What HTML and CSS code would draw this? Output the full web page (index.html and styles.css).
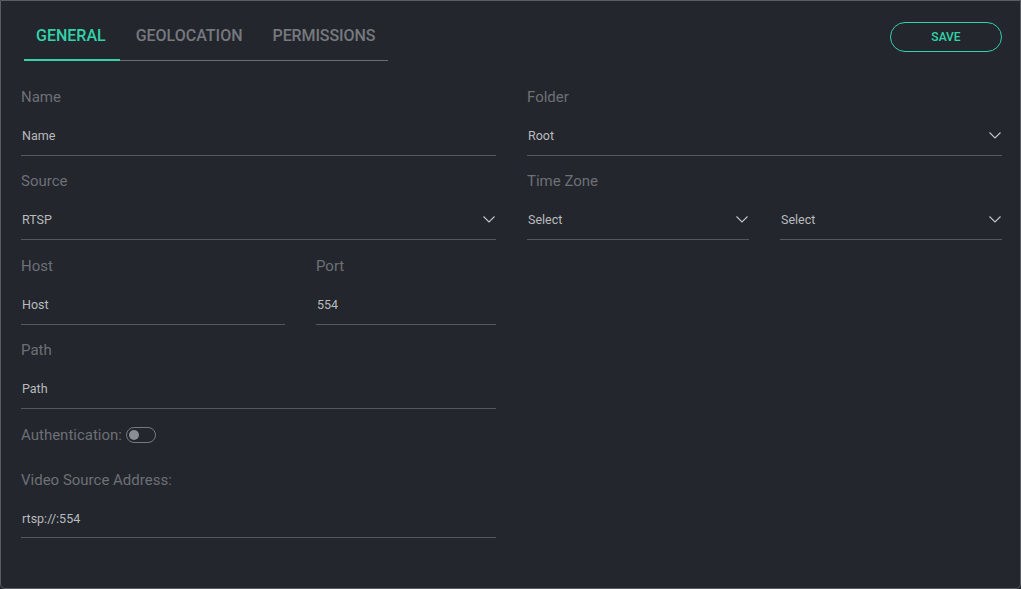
FILE: index.html
```html
<!DOCTYPE html>
<html>
<head>
<meta charset="utf-8">
<link rel="stylesheet" href="styles.css">
</head>
<body>
<div class="panel">
  <div class="header">
    <div class="tabs">
      <div class="tab active">GENERAL</div>
      <div class="tab">GEOLOCATION</div>
      <div class="tab">PERMISSIONS</div>
    </div>
    <button class="save">SAVE</button>
  </div>
  <div class="form">
    <div class="col">
      <div class="field">
        <div class="label">Name</div>
        <div class="input"><span>Name</span></div>
      </div>
      <div class="field">
        <div class="label">Source</div>
        <div class="input"><span>RTSP</span><svg class="chev" viewBox="0 0 12 7"><path d="M0.5 0.5 L6 6 L11.5 0.5" /></svg></div>
      </div>
      <div class="row hostrow">
        <div class="field host">
          <div class="label">Host</div>
          <div class="input"><span>Host</span></div>
        </div>
        <div class="field port">
          <div class="label">Port</div>
          <div class="input"><span>554</span></div>
        </div>
      </div>
      <div class="field">
        <div class="label">Path</div>
        <div class="input"><span>Path</span></div>
      </div>
      <div class="auth">
        <span class="label">Authentication:</span>
        <span class="toggle"><span class="knob"></span></span>
      </div>
      <div class="field video">
        <div class="label">Video Source Address:</div>
        <div class="input"><span>rtsp://:554</span></div>
      </div>
    </div>
    <div class="col">
      <div class="field">
        <div class="label">Folder</div>
        <div class="input"><span>Root</span><svg class="chev" viewBox="0 0 12 7"><path d="M0.5 0.5 L6 6 L11.5 0.5" /></svg></div>
      </div>
      <div class="field">
        <div class="label">Time Zone</div>
        <div class="row">
          <div class="input half"><span>Select</span><svg class="chev" viewBox="0 0 12 7"><path d="M0.5 0.5 L6 6 L11.5 0.5" /></svg></div>
          <div class="input half"><span>Select</span><svg class="chev" viewBox="0 0 12 7"><path d="M0.5 0.5 L6 6 L11.5 0.5" /></svg></div>
        </div>
      </div>
    </div>
  </div>
</div>
</body>
</html>
```

FILE: styles.css
```css
html, body {
  margin: 0;
  padding: 0;
  background: #23262d;
}
body {
  font-family: Roboto, "Liberation Sans", sans-serif;
}
.panel {
  box-sizing: border-box;
  width: 1021px;
  height: 589px;
  background: #23262d;
  border: 1px solid #5b5e63;
  border-radius: 0 0 5px 5px;
  padding: 0 18px 0 20px;
}
.header {
  display: flex;
  justify-content: space-between;
  align-items: flex-start;
  padding-top: 20px;
}
.tabs {
  display: flex;
  margin-left: 3px;
  border-bottom: 1px solid #6a6d72;
}
.tab {
  font-size: 16px;
  font-weight: 500;
  line-height: 18px;
  padding: 6px 14px 14px 12px;
  color: #76797e;
  margin-bottom: -1px;
  border-bottom: 2px solid transparent;
}
.tab + .tab { padding-left: 16px; }
.tab:last-child { padding-right: 13px; letter-spacing: -0.1px; }
.tab.active {
  color: #33d2a8;
  border-bottom-color: #33d2a8;
}
.save {
  margin-top: 1px;
  width: 112px;
  height: 30px;
  border: 1px solid #33d2a8;
  border-radius: 15px;
  background: transparent;
  color: #33d2a8;
  font-family: Roboto, "Liberation Sans", sans-serif;
  font-size: 12px;
  font-weight: 500;
  padding: 0;
}
.form {
  display: grid;
  grid-template-columns: 475px 475px;
  column-gap: 31px;
  margin-top: 27px;
}
.col {
  display: flex;
  flex-direction: column;
  gap: 16px;
}
.row {
  display: flex;
  gap: 31px;
}
.hostrow { margin-top: 1px; }
.field {
  display: flex;
  flex-direction: column;
}
.host { width: 264px; }
.port { flex: 1; }
.label {
  font-size: 15px;
  line-height: 18px;
  color: #6d7075;
}
.field > .label { margin-bottom: 21px; }
.input {
  display: flex;
  align-items: center;
  justify-content: space-between;
  height: 16px;
  padding: 0 1px 12px 1px;
  border-bottom: 1px solid #55585d;
  font-size: 12.5px;
  color: #b9bbbe;
}
.half { flex: 1; }
.chev {
  width: 12px;
  height: 7px;
  fill: none;
  stroke: #c3c5c8;
  stroke-width: 1.1;
}
.auth {
  display: flex;
  align-items: center;
  gap: 4px;
  height: 18px;
  margin-top: 1px;
  margin-bottom: 11px;
}
.toggle {
  box-sizing: border-box;
  width: 30px;
  height: 16px;
  border: 1px solid #76797e;
  border-radius: 8px;
  display: flex;
  align-items: center;
  padding-left: 2px;
}
.knob {
  width: 10px;
  height: 10px;
  border-radius: 50%;
  background: #8a8d91;
}
.video .input { padding-bottom: 11px; }
```
